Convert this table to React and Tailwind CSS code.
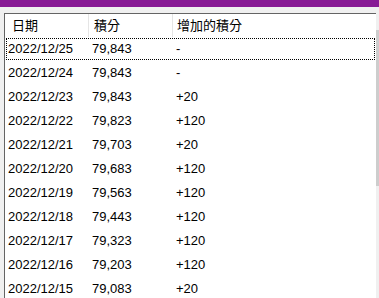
import React from 'react';

const rows = [
  ['2022/12/25', '79,843', '-'],
  ['2022/12/24', '79,843', '-'],
  ['2022/12/23', '79,843', '+20'],
  ['2022/12/22', '79,823', '+120'],
  ['2022/12/21', '79,703', '+20'],
  ['2022/12/20', '79,683', '+120'],
  ['2022/12/19', '79,563', '+120'],
  ['2022/12/18', '79,443', '+120'],
  ['2022/12/17', '79,323', '+120'],
  ['2022/12/16', '79,203', '+120'],
  ['2022/12/15', '79,083', '+20'],
];

export default function App() {
  return (
    <div className="w-[379px] h-[298px] overflow-hidden bg-[#f0f0f0] flex flex-col text-[13px] text-black font-['Liberation_Sans','Noto_Sans_CJK_TC',sans-serif]">
      {/* 标题栏 */}
      <div className="h-[7px] bg-[#881a95] shrink-0" />
      <div className="h-[6px] shrink-0" />

      <div className="flex flex-1 min-h-0">
        <div className="w-[4px] shrink-0" />
        <div className="flex-1 flex flex-col bg-white border-l border-t border-[#646464] min-h-0">
          {/* 表头 */}
          <div className="flex h-[23px] shrink-0 items-center">
            <div className="w-[83px] pl-[7px] leading-[23px]">日期</div>
            <div className="w-px h-full bg-[#e5e5e5]" />
            <div className="w-[83px] pl-[5px] leading-[23px]">積分</div>
            <div className="w-px h-full bg-[#e5e5e5]" />
            <div className="flex-1 pl-[4px] leading-[23px]">增加的積分</div>
          </div>

          {rows.map(([date, pts, add], i) => (
            <div key={date} className="h-[24px] shrink-0 p-px">
              <div className={`flex h-full items-center ${i === 0 ? 'border border-dotted border-black' : 'border border-transparent'}`}>
                <div className="w-[83px] pl-[2px] -ml-px">{date}</div>
                <div className="w-[84px] pl-[3px]">{pts}</div>
                <div className="flex-1 pl-[3px]">{add}</div>
              </div>
            </div>
          ))}
        </div>

        {/* 滚动条 */}
        <div className="w-[3px] shrink-0 flex flex-col bg-[#f0f0f0]">
          <div className="h-[17px]" />
          <div className="h-[156px] bg-[#cdcdcd]" />
        </div>
      </div>
    </div>
  );
}
